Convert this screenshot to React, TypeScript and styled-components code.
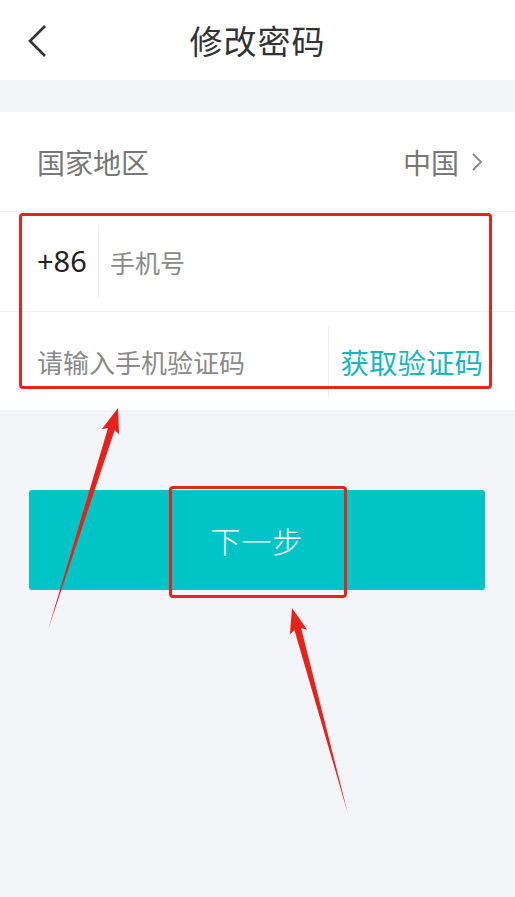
import React from 'react';
import styled, { createGlobalStyle } from 'styled-components';

const GlobalStyle = createGlobalStyle`
  html, body {
    margin: 0;
    padding: 0;
    background: #f3f5f9;
  }
  * {
    box-sizing: border-box;
  }
  body {
    font-family: "Noto Sans CJK SC", "Noto Sans", sans-serif;
  }
`;

const Page = styled.div`
  position: relative;
  width: 515px;
  min-height: 897px;
  background: #f3f5f9;
  overflow: hidden;
`;

const Header = styled.div`
  height: 80px;
  background: #fff;
  display: flex;
  align-items: center;
  justify-content: center;
  position: relative;
`;

const BackButton = styled.div`
  position: absolute;
  left: 26px;
  top: 24px;
  width: 26px;
  height: 34px;
  display: flex;
`;

const Title = styled.h1`
  margin: 0;
  font-size: 33px;
  font-weight: 400;
  color: #333;
  letter-spacing: 1px;
`;

const Spacer = styled.div`
  height: 32px;
`;

const Card = styled.div`
  background: #fff;
`;

const Row = styled.div<{ $height?: number; $line?: boolean }>`
  height: ${(p) => p.$height ?? 100}px;
  display: flex;
  align-items: center;
  padding: 0 32px 0 37px;
  border-bottom: ${(p) => (p.$line ? '1px solid #f0f0f0' : 'none')};
`;

const Label = styled.span`
  flex: 1;
  font-size: 28px;
  color: #777;
`;

const Value = styled.span`
  font-size: 28px;
  color: #777;
  display: flex;
  align-items: center;
  gap: 12px;
`;

const Prefix = styled.span`
  font-family: "Noto Sans", sans-serif;
  font-size: 29px;
  color: #222;
  width: 61px;
  padding-bottom: 2px;
`;

const VDivider = styled.div`
  width: 1px;
  height: 70px;
  background: #ededed;
  margin-right: 11px;
`;

const Placeholder = styled.span<{ $size?: number }>`
  flex: 1;
  font-size: ${(p) => p.$size ?? 25}px;
  color: #8a8a8a;
`;

const CodeRow = styled.div`
  height: 98px;
  display: flex;
  align-items: center;
  padding: 0 32px 0 37px;
`;

const CodeDivider = styled.div`
  width: 1px;
  height: 70px;
  background: #ededed;
  margin-right: 11px;
  margin-top: 2px;
`;

const GetCode = styled.span`
  font-size: 28.5px;
  color: #17b8bd;
`;

const ButtonWrap = styled.div`
  padding: 80px 30px 0 29px;
`;

const NextButton = styled.button`
  width: 100%;
  height: 100px;
  border: none;
  border-radius: 3px;
  background: #00c4c6;
  color: #fff;
  font-family: "Noto Sans CJK SC", sans-serif;
  font-size: 30px;
  font-weight: 300;
  letter-spacing: 1px;
`;

const Highlight = styled.div<{ $x: number; $y: number; $w: number; $h: number }>`
  position: absolute;
  left: ${(p) => p.$x}px;
  top: ${(p) => p.$y}px;
  width: ${(p) => p.$w}px;
  height: ${(p) => p.$h}px;
  border: 3px solid #e3261c;
  border-radius: 4px;
  pointer-events: none;
`;

const ArrowLayer = styled.svg`
  position: absolute;
  left: 0;
  top: 0;
  pointer-events: none;
`;

const Chevron = () => (
  <svg width="26" height="34" viewBox="0 0 26 34">
    <path d="M19 2 L4 17 L19 32" fill="none" stroke="#333" strokeWidth="2.6" strokeLinejoin="miter" />
  </svg>
);

const SmallChevron = () => (
  <svg width="12" height="20" viewBox="0 0 12 20">
    <path d="M2 2 L10 10 L2 18" fill="none" stroke="#888" strokeWidth="1.8" />
  </svg>
);

// builds a tapered arrow polygon from tail to tip
const arrowPoints = (tx: number, ty: number, hx: number, hy: number) => {
  const dx = hx - tx;
  const dy = hy - ty;
  const len = Math.hypot(dx, dy);
  const ux = dx / len;
  const uy = dy / len;
  const nx = -uy;
  const ny = ux;
  const headLen = 22;
  const headW = 9;
  const shaftW = 3.5;
  const bx = hx - ux * headLen;
  const by = hy - uy * headLen;
  const pts = [
    [tx, ty],
    [bx + nx * shaftW, by + ny * shaftW],
    [bx + nx * headW - ux * 3, by + ny * headW - uy * 3],
    [hx, hy],
    [bx - nx * headW - ux * 3, by - ny * headW - uy * 3],
    [bx - nx * shaftW, by - ny * shaftW],
  ];
  return pts.map((p) => p.map((v) => v.toFixed(1)).join(',')).join(' ');
};

const App: React.FC = () => {
  return (
    <>
      <GlobalStyle />
      <Page>
        <Header>
          <BackButton>
            <Chevron />
          </BackButton>
          <Title>修改密码</Title>
        </Header>
        <Spacer />
        <Card>
          <Row $line>
            <Label>国家地区</Label>
            <Value>
              中国
              <SmallChevron />
            </Value>
          </Row>
          <Row $line>
            <Prefix>+86</Prefix>
            <VDivider />
            <Placeholder>手机号</Placeholder>
          </Row>
          <CodeRow>
            <Placeholder $size={26}>请输入手机验证码</Placeholder>
            <CodeDivider />
            <GetCode>获取验证码</GetCode>
          </CodeRow>
        </Card>
        <ButtonWrap>
          <NextButton>下一步</NextButton>
        </ButtonWrap>

        <Highlight $x={19} $y={213} $w={473} $h={176} />
        <Highlight $x={169} $y={486} $w={178} $h={112} />
        <ArrowLayer width="515" height="897" viewBox="0 0 515 897">
          <polygon points={arrowPoints(48, 630, 118, 408)} fill="#e8221b" />
          <polygon points={arrowPoints(348, 814, 292, 608)} fill="#e8221b" />
        </ArrowLayer>
      </Page>
    </>
  );
};

export default App;
